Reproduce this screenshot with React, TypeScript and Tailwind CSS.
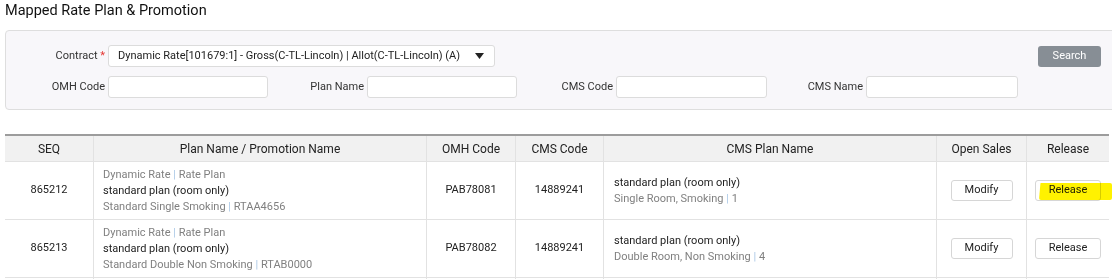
const rows = [
  {
    seq: '865212',
    type: 'Dynamic Rate',
    kind: 'Rate Plan',
    plan: 'standard plan (room only)',
    room: 'Standard Single Smoking',
    roomCode: 'RTAA4656',
    omh: 'PAB78081',
    cms: '14889241',
    cmsPlan: 'standard plan (room only)',
    cmsRoom: 'Single Room, Smoking',
    cmsNo: '1',
  },
  {
    seq: '865213',
    type: 'Dynamic Rate',
    kind: 'Rate Plan',
    plan: 'standard plan (room only)',
    room: 'Standard Double Non Smoking',
    roomCode: 'RTAB0000',
    omh: 'PAB78082',
    cms: '14889241',
    cmsPlan: 'standard plan (room only)',
    cmsRoom: 'Double Room, Non Smoking',
    cmsNo: '4',
  },
];

const cols = 'grid grid-cols-[89px_333px_89px_88px_333px_90px_82px]';
const headCell = 'h-[26px] flex items-center justify-center border-r border-b border-[#e2e2e2] bg-[#f1f1f1] text-[12px] text-[#222]';
const cell = 'h-[58px] flex items-center border-r border-b border-[#e2e2e2] text-[11px] text-[#222]';
const emptyCell = 'h-[10px] border-r border-[#e2e2e2]';

function Pipe() {
  return <span className="text-[#a9c7e6]"> | </span>;
}

function Field({ label, w, labelW }: { label: string; w: string; labelW: string }) {
  return (
    <div className="flex items-center">
      <div className={`${labelW} text-right text-[11px] text-[#333] pr-[3px]`}>{label}</div>
      <div className={`${w} h-[22px] bg-white border border-[#dcdcdc] rounded-[3px]`} />
    </div>
  );
}

export default function App() {
  return (
    <div className="w-[1112px] h-[279px] overflow-hidden bg-white font-[family-name:Roboto,'Liberation_Sans',sans-serif] relative">
      <div className="h-[22px] leading-[22px] pl-[5px] text-[14.5px] text-[#111]">Mapped Rate Plan &amp; Promotion</div>

      <div className="mt-[8px] ml-[5px] w-[1115px] h-[80px] border border-[#dedede] rounded-[4px] bg-[#f8f7fa] pt-[14px]">
        <div className="flex items-center h-[22px]">
          <div className="w-[102px] text-right text-[11px] text-[#333] pr-[3px]">
            Contract <span className="text-[#e53935]">*</span>
          </div>
          <div className="w-[387px] h-[22px] bg-white border border-[#dcdcdc] rounded-[3px] flex items-center pl-[9px] pr-[10px] text-[11px] text-[#222] whitespace-nowrap">
            <span className="flex-1">Dynamic Rate[101679:1] - Gross(C-TL-Lincoln) | Allot(C-TL-Lincoln) (A)</span>
            <svg width="9" height="6" viewBox="0 0 9 6" className="shrink-0"><path d="M0 0h9L4.5 6z" fill="#222" /></svg>
          </div>
          <button className="ml-[543px] w-[63px] h-[21px] rounded-[3px] bg-[#878e95] text-white text-[11px]">Search</button>
        </div>
        <div className="flex items-center mt-[9px]">
          <Field label="OMH Code" labelW="w-[102px]" w="w-[160px]" />
          <Field label="Plan Name" labelW="w-[99px]" w="w-[150px]" />
          <Field label="CMS Code" labelW="w-[99px]" w="w-[151px]" />
          <Field label="CMS Name" labelW="w-[99px]" w="w-[152px]" />
        </div>
      </div>

      <div className="mt-[24px] ml-[5px] w-[1104px] border-t-2 border-[#9c9c9c]">
        <div className={cols}>
          <div className={headCell}>SEQ</div>
          <div className={headCell}>Plan Name / Promotion Name</div>
          <div className={headCell}>OMH Code</div>
          <div className={headCell}>CMS Code</div>
          <div className={headCell}>CMS Plan Name</div>
          <div className={headCell}>Open Sales</div>
          <div className={`${headCell} border-r-0`}>Release</div>
        </div>
        {rows.map((r) => (
          <div key={r.seq} className={cols}>
            <div className={`${cell} justify-center`}>{r.seq}</div>
            <div className={`${cell} pl-[9px]`}>
              <div className="leading-[16px]">
                <div className="text-[#808080]">
                  {r.type}
                  <Pipe />
                  {r.kind}
                </div>
                <div>{r.plan}</div>
                <div className="text-[#808080]">
                  {r.room}
                  <Pipe />
                  {r.roomCode}
                </div>
              </div>
            </div>
            <div className={`${cell} justify-center`}>{r.omh}</div>
            <div className={`${cell} justify-center`}>{r.cms}</div>
            <div className={`${cell} pl-[10px]`}>
              <div className="leading-[16px]">
                <div>{r.cmsPlan}</div>
                <div className="text-[#808080]">
                  {r.cmsRoom}
                  <Pipe />
                  {r.cmsNo}
                </div>
              </div>
            </div>
            <div className={`${cell} justify-center`}>
              <button className="w-[62px] h-[21px] bg-white border border-[#d6d6d6] rounded-[3px] text-[11px] text-[#222]">Modify</button>
            </div>
            <div className={`${cell} justify-center border-r-0`}>
              <button className="w-[66px] h-[21px] bg-white border border-[#d6d6d6] rounded-[3px] text-[11px] text-[#222]">Release</button>
            </div>
          </div>
        ))}
        <div className={cols}>
          <div className={emptyCell} />
          <div className={emptyCell} />
          <div className={emptyCell} />
          <div className={emptyCell} />
          <div className={emptyCell} />
          <div className={emptyCell} />
          <div className={`${emptyCell} border-r-0`} />
        </div>
      </div>

      <div className="absolute left-[1039px] top-[183px] w-[73px] h-[17px] bg-[#fff200] mix-blend-multiply rounded-[2px] [clip-path:polygon(2%_0,100%_0,100%_100%,0_100%)]" />
    </div>
  );
}
